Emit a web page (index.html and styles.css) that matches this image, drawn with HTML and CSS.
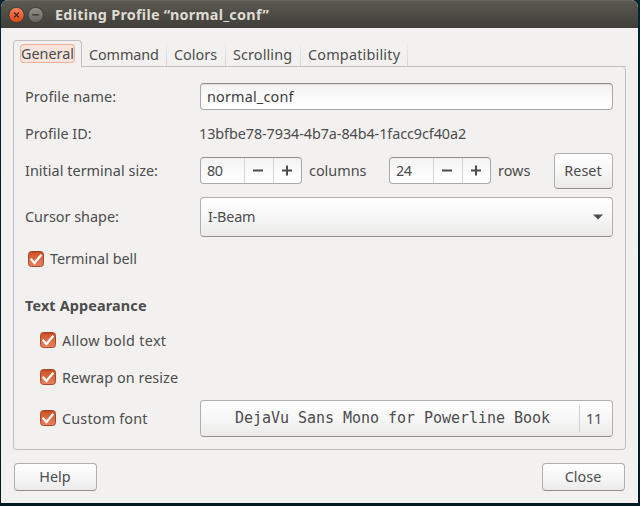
FILE: index.html
```html
<!DOCTYPE html>
<html lang="en">
<head>
<meta charset="utf-8">
<title>Editing Profile</title>
<link rel="stylesheet" href="styles.css">
</head>
<body>
<svg class="defs" width="0" height="0">
  <defs>
    <linearGradient id="boxFill" x1="0" y1="0" x2="0" y2="1"><stop offset="0" stop-color="#cf4f22"/><stop offset="1" stop-color="#e58361"/></linearGradient>
    <symbol id="check" viewBox="0 0 16 16">
      <rect x=".5" y=".5" width="15" height="15" rx="3" fill="url(#boxFill)" stroke="#a8492a"/>
      <path d="M3 1h10" stroke="#8e3514" stroke-opacity=".5"/>
      <path d="M2.6 7.8l3.8 4.2 7-8.2" fill="none" stroke="#fff" stroke-width="2.3"/>
    </symbol>
  </defs>
</svg>
<div class="window">
  <header class="titlebar">
    <svg class="controls" width="36" height="18" viewBox="0 0 36 18">
      <defs>
        <linearGradient id="closeFill" x1="0" y1="0" x2="0" y2="1"><stop offset="0" stop-color="#f58462"/><stop offset=".5" stop-color="#ec643b"/><stop offset="1" stop-color="#df4a16"/></linearGradient>
        <linearGradient id="minFill" x1="0" y1="0" x2="0" y2="1"><stop offset="0" stop-color="#93918a"/><stop offset="1" stop-color="#64635d"/></linearGradient>
      </defs>
      <circle cx="8.5" cy="9" r="7.6" fill="url(#closeFill)" stroke="#38372f" stroke-width=".8"/>
      <path d="M6 6.5l5 5M11 6.5l-5 5" stroke="#3d2a20" stroke-width="1.2"/>
      <circle cx="27.7" cy="9" r="7.6" fill="url(#minFill)" stroke="#38372f" stroke-width=".8"/>
      <path d="M24.2 8.8h7" stroke="#34332e" stroke-width="1.2"/>
    </svg>
    <h1><span class="t-title">Editing Profile “normal_conf”</span></h1>
  </header>
  <main class="content">
    <nav class="tabs">
      <div class="tab active"><span class="focus"><span class="t-general">General</span></span></div>
      <div class="tab tab-command"><span class="t-command">Command</span></div>
      <div class="tab tab-colors"><span class="t-colors">Colors</span></div>
      <div class="tab tab-scrolling"><span class="t-scrolling">Scrolling</span></div>
      <div class="tab tab-compat"><span class="t-compat">Compatibility</span></div>
      <div class="tab-rest"></div>
    </nav>
    <section class="panel">
      <div class="row row-name"><label class="name"><span class="t-name">Profile name:</span></label><div class="entry"><span class="t-conf">normal_conf</span></div></div>
      <div class="row row-id"><label class="name"><span class="t-id">Profile ID:</span></label><span class="t-uuid">13bfbe78-7934-4b7a-84b4-1facc9cf40a2</span></div>
      <div class="row row-size">
        <label class="name"><span class="t-size">Initial terminal size:</span></label>
        <div class="spin"><span class="value">80</span><span class="step"><svg width="12" height="12"><path d="M0 5.5h10" stroke="#4c4c4c" stroke-width="2"/></svg></span><span class="step"><svg width="12" height="12"><path d="M1 5.5h10M6 .5v10" stroke="#4c4c4c" stroke-width="2"/></svg></span></div>
        <span class="unit unit-columns"><span class="t-columns">columns</span></span>
        <div class="spin"><span class="value">24</span><span class="step"><svg width="12" height="12"><path d="M0 5.5h10" stroke="#4c4c4c" stroke-width="2"/></svg></span><span class="step"><svg width="12" height="12"><path d="M1 5.5h10M6 .5v10" stroke="#4c4c4c" stroke-width="2"/></svg></span></div>
        <span class="unit unit-rows"><span class="t-rows">rows</span></span>
        <div class="button reset"><span class="t-reset">Reset</span></div>
      </div>
      <div class="row row-cursor"><label class="name"><span class="t-cursor">Cursor shape:</span></label><div class="button combo"><span class="t-beam">I-Beam</span><svg width="10" height="6"><path d="M0 .5h10L5 5.5z" fill="#4c4c4c"/></svg></div></div>
      <div class="check bell"><svg width="16" height="16"><use href="#check"/></svg><span class="t-bell">Terminal bell</span></div>
      <h2><span class="t-text">Text Appearance</span></h2>
      <div class="check bold"><svg width="16" height="16"><use href="#check"/></svg><span class="t-bold">Allow bold text</span></div>
      <div class="check rewrap"><svg width="16" height="16"><use href="#check"/></svg><span class="t-rewrap">Rewrap on resize</span></div>
      <div class="row row-font">
        <div class="check custom"><svg width="16" height="16"><use href="#check"/></svg><span class="t-custom">Custom font</span></div>
        <div class="button font"><span class="font-name">DejaVu Sans Mono for Powerline Book</span><span class="font-size">11</span></div>
      </div>
    </section>
    <footer class="actions"><div class="button action"><span class="t-help">Help</span></div><div class="button action"><span class="t-close">Close</span></div></footer>
  </main>
</div>
</body>
</html>
```
FILE: styles.css
```css
* { box-sizing: border-box; }
body {
  margin: 0;
  height: 506px;
  padding: 0 2px 3px 1px;
  overflow: hidden;
  background: linear-gradient(#002632, #001a1f);
  font: 14.4px/20px "Noto Sans", "Open Sans", sans-serif;
  color: #4c4c4c;
  white-space: nowrap;
}
.defs { position: absolute; }
svg { display: block; flex: none; }
.window { height: 503px; background: #f2f1f0; border-radius: 7px 7px 0 0; overflow: hidden; }
.titlebar {
  display: flex;
  align-items: center;
  height: 28px;
  padding: 1px 0 0 7px;
  background: linear-gradient(#5b5951, #3f3e39);
  border-top: 1px solid #68665c;
}
h1 { margin: 0 0 0 11px; font-size: 14.4px; font-weight: 700; line-height: 20px; color: #dfdbd2; letter-spacing: .25px; }
.content { padding: 12px 12px 0; }
.tabs { display: flex; height: 27px; align-items: stretch; }
.tab { display: flex; align-items: center; padding: 3px 0 0 7px; }
.tab:not(.active) { background: linear-gradient(#c0bfbd, #c0bfbd) bottom / 100% 1px no-repeat, linear-gradient(#f2f1f0, #d2d1cf) right / 1px 100% no-repeat; }
.active { width: 69px; border: 1px solid #c0bfbd; border-bottom: 0; border-radius: 4px 4px 0 0; padding: 3px 0 2px 6px; align-items: flex-start; }
.focus { width: 55px; height: 19px; line-height: 19px; padding-left: 1px; background: #f5e3dc; box-shadow: inset 0 0 0 1px #f2b299; border-radius: 4px; }
.tab-command { width: 85px; letter-spacing: -.1px; }
.tab-colors { width: 59px; }
.tab-scrolling { width: 75px; letter-spacing: .12px; }
.tab-compat { width: 107px; letter-spacing: .2px; }
.tab-rest { flex: 1; border-bottom: 1px solid #c0bfbd; }
.panel { height: 383px; padding: 16px 12px 0 11px; border: 1px solid #c0bfbd; border-top: 0; border-radius: 0 4px 4px 4px; }
.row { display: flex; align-items: center; }
.name { width: 175px; }
.row-name { height: 27px; }
.row-name .name { letter-spacing: .12px; }
.entry {
  width: 413px;
  height: 27px;
  padding: 3px 0 0 6px;
  border: 1px solid #aaa9a7;
  border-top-color: #8e8d8b;
  border-radius: 4px;
  background: linear-gradient(#f3f3f3, #fff 85%);
  box-shadow: inset 0 1px 1px #dededd;
  color: #3c3c3c;
  letter-spacing: .18px;
}
.row-id { height: 43px; padding-top: 4px; }
.t-uuid { margin-left: -1px; letter-spacing: -.08px; }
.row-size { height: 36px; }
.row-size .name { letter-spacing: .04px; }
.spin { display: flex; width: 102px; height: 27px; margin-top: -1px; border: 1px solid #aaa9a7; border-top-color: #8e8d8b; border-radius: 4px; background: linear-gradient(#f3f3f3, #fff 85%); }
.value { width: 43px; padding: 3px 0 0 6px; letter-spacing: -.5px; }
.step { display: flex; align-items: center; justify-content: center; flex: 1; border-left: 1px solid #d5d4d2; }
.unit { padding-left: 7px; }
.unit-columns { width: 87px; }
.unit-rows { width: 63px; }
.button {
  display: flex;
  align-items: center;
  justify-content: center;
  border: 1px solid #b0afad;
  border-bottom-color: #929190;
  border-radius: 4px;
  background: linear-gradient(#fff, #f7f7f7 50%, #ebeae9);
}
.reset { width: 59px; height: 36px; padding-right: 1px; }
.row-cursor { height: 40px; margin-top: 8px; }
.combo { width: 413px; height: 40px; justify-content: space-between; padding: 0 9px 0 7px; letter-spacing: -.2px; }
.check { display: flex; align-items: center; gap: 6px; }
.bell { height: 44px; padding-left: 3px; }
h2 { height: 32px; margin: 9px 0 0; font-size: 14.4px; line-height: 32px; letter-spacing: .15px; }
.bold { height: 36px; padding: 1px 0 0 15px; letter-spacing: .3px; }
.bold svg { margin-top: -1px; }
.rewrap { height: 38px; padding: 1px 0 0 15px; letter-spacing: .07px; }
.rewrap svg { margin-top: -1px; }
.row-font { height: 37px; margin-top: 4px; }
.custom { width: 175px; padding-left: 15px; letter-spacing: .18px; }
.custom svg { margin-top: -2px; }
.font { width: 413px; height: 37px; }
.font-name { width: 378px; padding: 0 0 2px 34px; font: 15px/20px "DejaVu Sans Mono", monospace; letter-spacing: -.03px; }
.font-size { flex: 1; height: 27px; padding: 4px 0 0 6px; border-left: 1px solid #d2d1cf; letter-spacing: -.2px; }
.actions { display: flex; justify-content: space-between; padding: 13px 1px 0; }
.action { width: 83px; height: 28px; padding-right: 1px; }
```
